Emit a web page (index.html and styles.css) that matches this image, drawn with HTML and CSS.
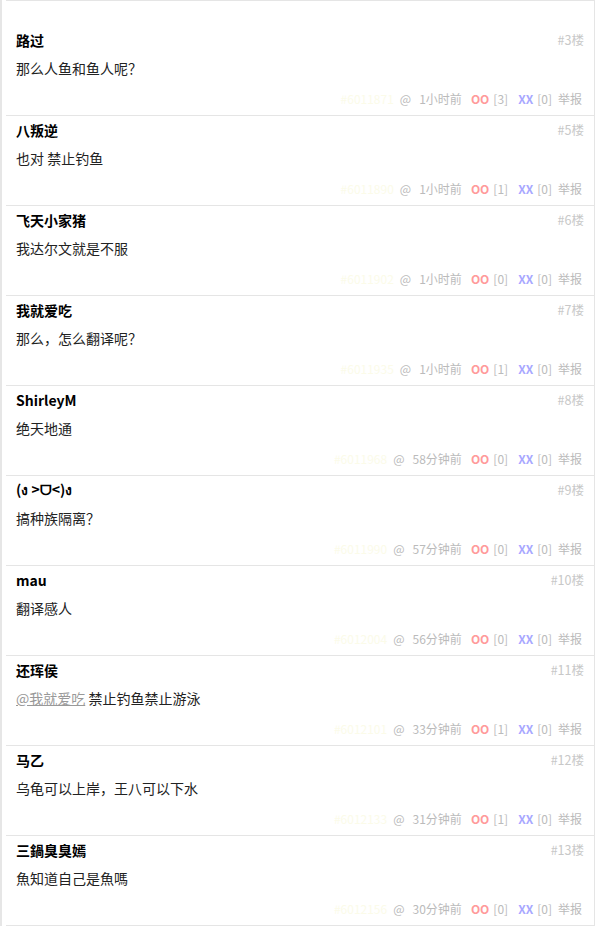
FILE: index.html
```html
<!DOCTYPE html>
<html lang="zh-CN">
<head>
  <meta charset="UTF-8">
  <title>吐槽</title>
  <link rel="stylesheet" href="styles.css">
</head>
<body>
  <div class="page">
    <ol class="comments">
      <li class="comment">
        <div class="head"><strong class="author">路过</strong><span class="floor">#3楼</span></div>
        <p class="text">那么人鱼和鱼人呢？</p>
        <div class="meta"><span class="cid">#6011871</span><span class="at">@</span><span class="time">1小时前</span><span class="oo">OO</span><span class="num">[3]</span><span class="xx">XX</span><span class="num">[0]</span><span class="report">举报</span></div>
      </li>
      <li class="comment">
        <div class="head"><strong class="author">八叛逆</strong><span class="floor">#5楼</span></div>
        <p class="text">也对 禁止钓鱼</p>
        <div class="meta"><span class="cid">#6011890</span><span class="at">@</span><span class="time">1小时前</span><span class="oo">OO</span><span class="num">[1]</span><span class="xx">XX</span><span class="num">[0]</span><span class="report">举报</span></div>
      </li>
      <li class="comment">
        <div class="head"><strong class="author">飞天小家猪</strong><span class="floor">#6楼</span></div>
        <p class="text">我达尔文就是不服</p>
        <div class="meta"><span class="cid">#6011902</span><span class="at">@</span><span class="time">1小时前</span><span class="oo">OO</span><span class="num">[0]</span><span class="xx">XX</span><span class="num">[0]</span><span class="report">举报</span></div>
      </li>
      <li class="comment">
        <div class="head"><strong class="author">我就爱吃</strong><span class="floor">#7楼</span></div>
        <p class="text">那么，怎么翻译呢？</p>
        <div class="meta"><span class="cid">#6011935</span><span class="at">@</span><span class="time">1小时前</span><span class="oo">OO</span><span class="num">[1]</span><span class="xx">XX</span><span class="num">[0]</span><span class="report">举报</span></div>
      </li>
      <li class="comment">
        <div class="head"><strong class="author">ShirleyM</strong><span class="floor">#8楼</span></div>
        <p class="text">绝天地通</p>
        <div class="meta"><span class="cid">#6011968</span><span class="at">@</span><span class="time">58分钟前</span><span class="oo">OO</span><span class="num">[0]</span><span class="xx">XX</span><span class="num">[0]</span><span class="report">举报</span></div>
      </li>
      <li class="comment">
        <div class="head"><strong class="author">(ง &gt;ᗜ&lt;)ง</strong><span class="floor">#9楼</span></div>
        <p class="text">搞种族隔离？</p>
        <div class="meta"><span class="cid">#6011990</span><span class="at">@</span><span class="time">57分钟前</span><span class="oo">OO</span><span class="num">[0]</span><span class="xx">XX</span><span class="num">[0]</span><span class="report">举报</span></div>
      </li>
      <li class="comment">
        <div class="head"><strong class="author">mau</strong><span class="floor">#10楼</span></div>
        <p class="text">翻译感人</p>
        <div class="meta"><span class="cid">#6012004</span><span class="at">@</span><span class="time">56分钟前</span><span class="oo">OO</span><span class="num">[0]</span><span class="xx">XX</span><span class="num">[0]</span><span class="report">举报</span></div>
      </li>
      <li class="comment">
        <div class="head"><strong class="author">还珲侯</strong><span class="floor">#11楼</span></div>
        <p class="text"><a class="mention" href="#">@我就爱吃</a> 禁止钓鱼禁止游泳</p>
        <div class="meta"><span class="cid">#6012101</span><span class="at">@</span><span class="time">33分钟前</span><span class="oo">OO</span><span class="num">[1]</span><span class="xx">XX</span><span class="num">[0]</span><span class="report">举报</span></div>
      </li>
      <li class="comment">
        <div class="head"><strong class="author">马乙</strong><span class="floor">#12楼</span></div>
        <p class="text">乌龟可以上岸，王八可以下水</p>
        <div class="meta"><span class="cid">#6012133</span><span class="at">@</span><span class="time">31分钟前</span><span class="oo">OO</span><span class="num">[1]</span><span class="xx">XX</span><span class="num">[0]</span><span class="report">举报</span></div>
      </li>
      <li class="comment">
        <div class="head"><strong class="author">三鍋臭臭嫣</strong><span class="floor">#13楼</span></div>
        <p class="text">魚知道自己是魚嗎</p>
        <div class="meta"><span class="cid">#6012156</span><span class="at">@</span><span class="time">30分钟前</span><span class="oo">OO</span><span class="num">[0]</span><span class="xx">XX</span><span class="num">[0]</span><span class="report">举报</span></div>
      </li>
    </ol>
  </div>
</body>
</html>
```

FILE: styles.css
```css
body { margin: 0; background: #fff; font-family: "Noto Sans CJK SC", "Noto Sans", sans-serif; color: #222; }
.page { border-left: 2px solid #e6e6e6; padding-left: 4px; min-height: 926px; box-sizing: border-box; }
.comments { list-style: none; margin: 0; padding: 25px 0 0; width: 589px; border-top: 1px solid #e5e5e5; border-right: 1px solid #e5e5e5; box-sizing: border-box; }
.comment { padding: 0 10px 0 10px; border-bottom: 1px solid #e5e5e5; height: 90px; box-sizing: border-box; }
.head { display: flex; justify-content: space-between; align-items: center; height: 27px; }
.author { font-size: 14px; font-weight: bold; color: #000; }
.floor { font-size: 12.5px; color: #c8c8c8; }
.text { margin: 0; font-size: 14px; line-height: 30px; height: 30px; color: #222; }
.mention { color: #999; text-decoration: underline; }
.meta { display: flex; justify-content: flex-end; align-items: center; height: 32px; padding: 0 2px 2px 0; box-sizing: border-box; font-size: 12px; color: #bbb; }
.meta span { margin-left: 6px; }
.meta .cid { color: #fbfbe9; }
.meta .time { margin-left: 8px; }
.meta .oo { color: #ff9a9a; font-weight: bold; margin-left: 9px; }
.meta .xx { color: #a8a8ff; font-weight: bold; margin-left: 10px; }
.meta .num { margin-left: 4px; }
```
